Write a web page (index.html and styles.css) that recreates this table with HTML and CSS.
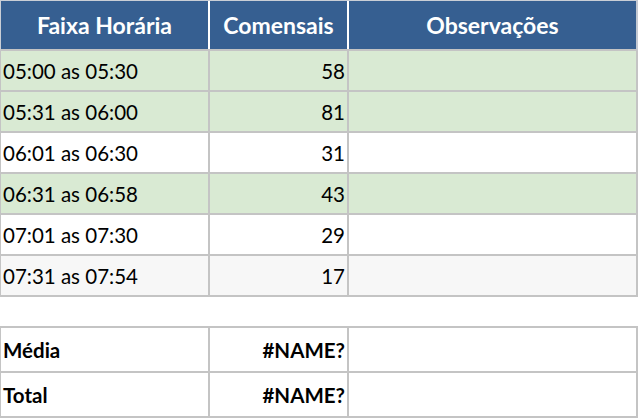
FILE: index.html
```html
<!DOCTYPE html>
<html lang="pt">
<head>
<meta charset="utf-8">
<title>Comensais</title>
<link rel="stylesheet" href="styles.css">
</head>
<body>
<div class="sheet">
  <div class="head">
    <div class="hcell">Faixa Horária</div>
    <div class="hcell">Comensais</div>
    <div class="hcell">Observações</div>
  </div>
  <div class="grid body">
    <div class="cell green">05:00 as 05:30</div><div class="cell green num">58</div><div class="cell green"></div>
    <div class="cell green">05:31 as 06:00</div><div class="cell green num">81</div><div class="cell green"></div>
    <div class="cell">06:01 as 06:30</div><div class="cell num">31</div><div class="cell"></div>
    <div class="cell green">06:31 as 06:58</div><div class="cell green num">43</div><div class="cell green"></div>
    <div class="cell">07:01 as 07:30</div><div class="cell num">29</div><div class="cell"></div>
    <div class="cell light">07:31 as 07:54</div><div class="cell light num">17</div><div class="cell light"></div>
  </div>
  <div class="grid summary">
    <div class="cell bold">Média</div><div class="cell bold num">#NAME?</div><div class="cell"></div>
    <div class="cell bold">Total</div><div class="cell bold num">#NAME?</div><div class="cell"></div>
  </div>
</div>
</body>
</html>
```
FILE: styles.css
```css
html, body {
  margin: 0;
  padding: 0;
  background: #ffffff;
}
.sheet {
  width: 638px;
  font-family: "Lato", "Liberation Sans", sans-serif;
  font-size: 20.5px;
  color: #000;
}
.head {
  display: grid;
  grid-template-columns: 207px 137px 287px;
  column-gap: 2px;
  background: #ffffff;
  border-top: 1px solid #c9ced6;
  border-left: 1px solid #c9ced6;
  border-right: 2px solid #c4c9d2;
  border-bottom: 2px solid #c4c4c4;
}
.hcell {
  height: 48px;
  background: #365f91;
  color: #ffffff;
  font-weight: 700;
  font-size: 23px;
  display: flex;
  align-items: center;
  justify-content: center;
}
.grid {
  display: grid;
  grid-template-columns: 207px 137px 287px;
  gap: 2px;
  background: #c4c4c4;
  padding: 0 2px 2px 1px;
}
.body {
  grid-auto-rows: 39px;
}
.summary {
  grid-auto-rows: 43px;
  margin-top: 29px;
  padding-top: 2px;
}
.cell {
  background: #ffffff;
  display: flex;
  align-items: center;
  padding: 0 2px;
  white-space: nowrap;
}
.cell.num {
  justify-content: flex-end;
}
.green {
  background: #d9ead3;
}
.light {
  background: #f7f7f7;
}
.bold {
  font-weight: 700;
}
```
